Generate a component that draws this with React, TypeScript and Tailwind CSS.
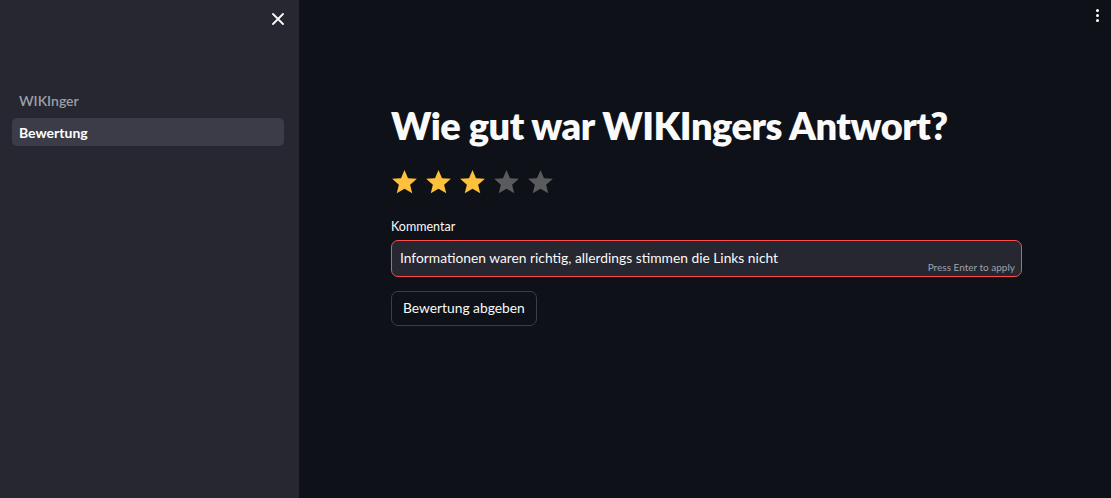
import React from "react";

const Star = ({ filled }: { filled: boolean }) => (
  <svg width="27" height="26" viewBox="0 0 24 23" className="shrink-0">
    <path
      d="M12 0.8l3.1 7.3 7.9 0.6-6 5.2 1.9 7.7L12 17.4l-6.9 4.2 1.9-7.7-6-5.2 7.9-0.6z"
      fill={filled ? "#ffc13b" : "#5a5b5e"}
    />
  </svg>
);

export default function App() {
  return (
    <div
      className="flex w-[1111px] h-[498px] overflow-hidden bg-[#0e1117] text-[#fafafa]"
      style={{ fontFamily: '"Lato", "Noto Sans", sans-serif' }}
    >
      <aside className="w-[299px] shrink-0 bg-[#262730] flex flex-col">
        <div className="h-[38px] flex items-center justify-end pr-[15px]">
          <svg width="12" height="12" viewBox="0 0 12 12">
            <path d="M1 1L11 11M11 1L1 11" stroke="#fafafa" strokeWidth="1.8" strokeLinecap="round" />
          </svg>
        </div>
        <nav className="mt-[48px] pl-[12px] pr-[15px] flex flex-col gap-[4px]">
          <div className="h-[28px] px-[7px] flex items-center text-[14px] font-semibold text-[#9d9fa8]">
            WIKInger
          </div>
          <div className="h-[28px] px-[7px] flex items-center rounded-[5px] bg-[#3b3c48] text-[14px] font-bold text-white">
            Bewertung
          </div>
        </nav>
      </aside>
      <main className="flex-1 relative">
        <div className="absolute right-[12px] top-[9px] flex flex-col gap-[2px]">
          <span className="w-[3px] h-[3px] bg-white rounded-full" />
          <span className="w-[3px] h-[3px] bg-white rounded-full" />
          <span className="w-[3px] h-[3px] bg-white rounded-full" />
        </div>
        <div className="ml-[92px] w-[631px] pt-[100px] flex flex-col">
          <h1 className="text-[38px] leading-[50px] font-extrabold tracking-[-0.5px]">
            Wie gut war WIKIngers Antwort?
          </h1>
          <div className="flex gap-[7px] mt-[19px]">
            <Star filled />
            <Star filled />
            <Star filled />
            <Star filled={false} />
            <Star filled={false} />
          </div>
          <label className="mt-[24px] text-[12.5px] leading-[16px] text-[#fafafa]">Kommentar</label>
          <div className="mt-[5px] h-[37px] rounded-[7px] border border-[#ff4b4b] bg-[#262730] relative flex items-center px-[8px]">
            <span className="text-[13.8px] text-[#fafafa]">
              Informationen waren richtig, allerdings stimmen die Links nicht
            </span>
            <span className="absolute right-[6px] bottom-[1px] text-[10px] text-[#a0a2a9]">
              Press Enter to apply
            </span>
          </div>
          <button className="mt-[14px] self-start h-[35px] px-[11px] rounded-[7px] border border-[#3c3e46] bg-[#0e1117] text-[13.8px] text-[#fafafa]">
            Bewertung abgeben
          </button>
        </div>
      </main>
    </div>
  );
}
